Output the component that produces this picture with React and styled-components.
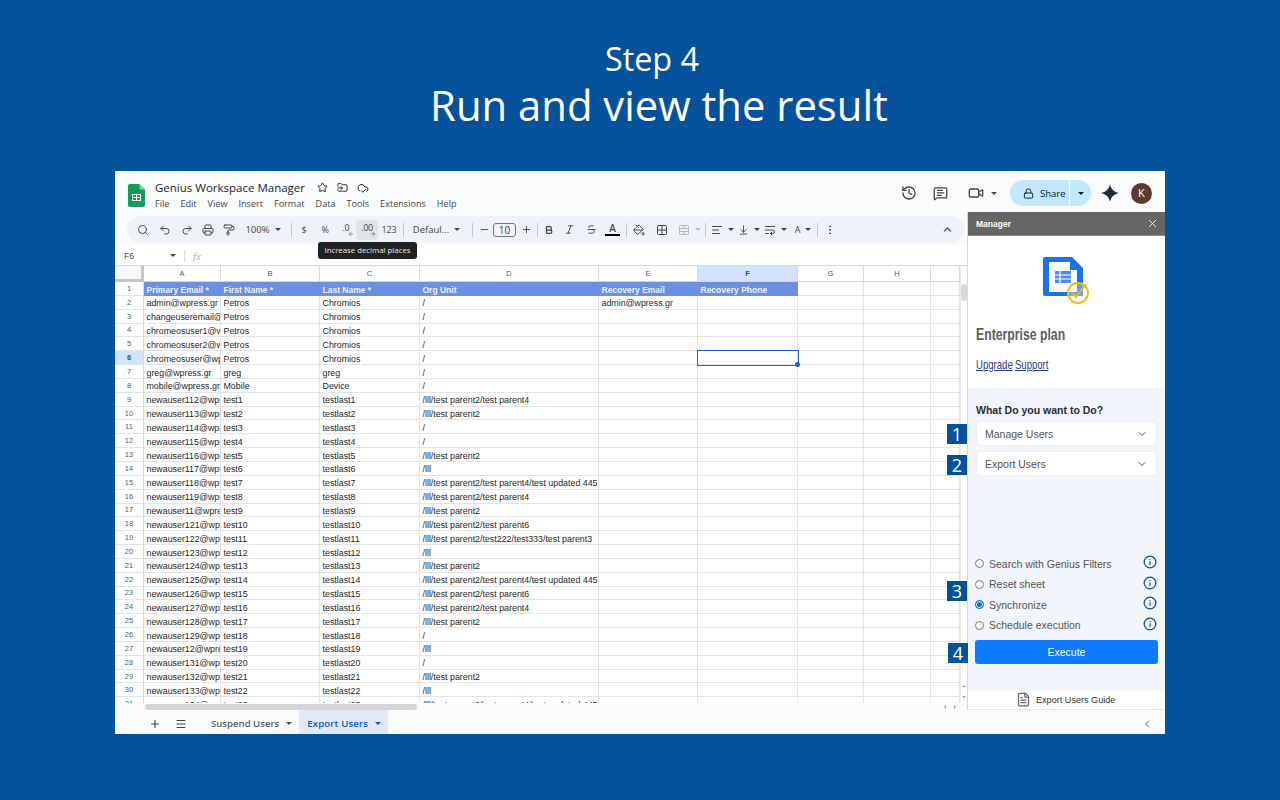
import React from 'react'
import styled, { createGlobalStyle } from 'styled-components'
import {
  Search, Undo2, Redo2, Printer, PaintRoller, Bold, Italic, Strikethrough, PaintBucket, Grid2x2,
  AlignLeft, ArrowDownToLine, EllipsisVertical, ChevronUp, ChevronDown, ChevronLeft, History,
  MessageSquareText, Video, Lock, Star, FolderInput, CloudCheck, X, Info, Plus, Menu, FileText,
  Minus, WrapText, TableCellsMerge, ArrowLeft, ArrowRight,
} from 'lucide-react'

const GlobalStyle = createGlobalStyle`
  html, body { margin: 0; padding: 0; background: #04529b; }
  * { box-sizing: border-box; }
`

const Page = styled.div`
  width: 1280px;
  height: 800px;
  background: #04529b;
  font-family: "Liberation Sans", Arial, sans-serif;
  overflow: hidden;
`
const Heading = styled.header`
  height: 171px;
  padding: 35px 0 0 24px;
  text-align: center;
  color: #fff;
  font-family: "Open Sans", sans-serif;
`
const StepLine = styled.div`
  font-size: 32.4px;
  line-height: 46px;
`
const TitleLine = styled.div`
  padding-left: 14px;
  font-size: 41.8px;
  line-height: 47px;
`
const Win = styled.div`
  position: relative;
  width: 1050px;
  height: 563px;
  margin-left: 115px;
  background: #f9fbfd;
  display: flex;
  flex-direction: column;
`
const TopBar = styled.div`
  height: 41px;
  display: flex;
  align-items: center;
  padding: 3px 0 0 13px;
  color: #444746;
  & > svg { margin-top: 5px; }
`
const TitleBox = styled.div`
  margin-left: 10px;
  display: flex;
  flex-direction: column;
  gap: 3px;
  padding-top: 4px;
`
const DocRow = styled.div`
  display: flex;
  align-items: center;
  gap: 9px;
  font-family: "Open Sans", sans-serif;
  font-size: 11.5px;
  line-height: 14px;
  color: #1f1f1f;
  & > span { margin-right: 3px; }
`
const MenuRow = styled.div`
  display: flex;
  gap: 11px;
  font-family: "Open Sans", sans-serif;
  font-size: 9.1px;
  line-height: 12px;
  color: #444746;
`
const TopActions = styled.div`
  margin-left: auto;
  display: flex;
  align-items: center;
  padding-right: 13px;
`
const VideoBox = styled.div`
  display: flex;
  align-items: center;
  margin: 0 13px 0 20px;
  gap: 7px;
`
const Caret = styled.span`
  display: inline-block;
  flex: none;
  width: 0;
  height: 0;
  margin: ${(p) => p.$m || '0'};
  border-left: 3px solid transparent;
  border-right: 3px solid transparent;
  border-top: 3px solid ${(p) => p.$color || '#444746'};
`
const ShareBtn = styled.div`
  display: flex;
  align-items: center;
  height: 26px;
  width: 81px;
  border-radius: 13px;
  background: #c2e7ff;
  color: #001d35;
  font-family: "Open Sans", sans-serif;
  font-size: 9.5px;
`
const ShareMain = styled.div`
  flex: 1;
  height: 100%;
  display: flex;
  align-items: center;
  gap: 6px;
  padding-left: 13px;
  border-right: 1px solid #f9fbfd;
`
const ShareDrop = styled.div`
  width: 21px;
  display: flex;
  justify-content: center;
`
const SparkWrap = styled.span`
  margin-left: 10px;
  display: flex;
`
const Avatar = styled.div`
  width: 21px;
  height: 21px;
  margin-left: 12px;
  border-radius: 50%;
  background: #5d3a2f;
  color: #fff;
  font-size: 10px;
  display: flex;
  align-items: center;
  justify-content: center;
`
const Body = styled.div`
  height: 498px;
  display: flex;
`
const Left = styled.div`
  width: 853px;
  display: flex;
  flex-direction: column;
  background: #fff;
  border-right: 1px solid #d5d7da;
`
const ToolWrap = styled.div`
  background: #f9fbfd;
  padding: 4px 2px 3px 12px;
`
const ToolPill = styled.div`
  height: 27px;
  border-radius: 14px;
  background: #eff3f9;
  display: flex;
  align-items: center;
  padding-left: 5px;
  color: #444746;
  font-family: "Open Sans", sans-serif;
  font-size: 9.5px;
`
const Tool = styled.div`
  position: relative;
  flex: none;
  width: ${(p) => p.$w || 21}px;
  height: 20px;
  margin-left: ${(p) => p.$ml || '0'};
  margin-right: ${(p) => p.$mr || '0'};
  display: flex;
  align-items: center;
  justify-content: center;
  gap: 5px;
  border-radius: 3px;
  color: ${(p) => p.$color || '#444746'};
  background: ${(p) => (p.$hover ? '#e1e5ea' : 'transparent')};
`
const ToolSep = styled.div`
  flex: none;
  width: 1px;
  height: 14px;
  margin: ${(p) => p.$m || '0 4px'};
  background: #c7c7c7;
`
const SizeBox = styled.div`
  flex: none;
  width: 23px;
  height: 14px;
  border: 1px solid #747775;
  border-radius: 3px;
  text-align: center;
  line-height: 12px;
  font-size: 10px;
`
const ColorA = styled.div`
  font-size: 10px;
  line-height: 10px;
  font-weight: 600;
  text-align: center;
  border-bottom: 2px solid #000;
  width: 15px;
  padding-bottom: 1px;
`
const DecText = styled.span`
  font-size: 9px;
  letter-spacing: -0.2px;
  margin-top: ${(p) => (p.$raised ? '-4px' : '0')};
`
const DecArrow = styled.span`
  position: absolute;
  right: 2px;
  bottom: 3px;
  display: flex;
`
const Tooltip = styled.div`
  position: absolute;
  left: 203px;
  top: 71px;
  z-index: 5;
  width: 99px;
  height: 17px;
  border-radius: 3px;
  background: #202124;
  color: #e8eaed;
  font-family: "Open Sans", sans-serif;
  font-size: 7.8px;
  line-height: 16px;
  text-align: center;
  white-space: nowrap;
`
const FormulaBar = styled.div`
  height: 20px;
  flex: none;
  display: flex;
  align-items: center;
  padding-left: 9px;
  font-size: 8.5px;
  color: #444746;
  border-bottom: 1px solid #d8d9db;
`
const NameBox = styled.div`
  width: 60px;
  display: flex;
  align-items: center;
  justify-content: space-between;
  padding-right: 8px;
`
const FxMark = styled.span`
  padding-left: 8px;
  border-left: 1px solid #d8d9db;
  font-family: "Liberation Serif", serif;
  font-style: italic;
  font-size: 11px;
  color: #b0b2b5;
`
const SheetArea = styled.div`
  flex: 1;
  min-height: 0;
  display: flex;
  flex-direction: column;
`
const SheetMain = styled.div`
  flex: 1;
  min-height: 0;
  display: flex;
`
const Grid = styled.div`
  width: 845px;
  height: 100%;
  overflow: hidden;
  display: grid;
  grid-template-columns: 29px 77px 99px 100px 179px 99px 100px 66px 67px 29px;
  grid-template-rows: 16px;
  grid-auto-rows: 13.85px;
  align-content: start;
`
const ColHead = styled.div`
  display: flex;
  align-items: center;
  justify-content: center;
  font-size: 7.5px;
  color: ${(p) => (p.$active ? '#0b57d0' : '#575a5e')};
  font-weight: ${(p) => (p.$active ? 700 : 400)};
  background: ${(p) => (p.$active ? '#d3e3fd' : '#fff')};
  border-right: 1px solid #d5d7da;
  border-bottom: 1px solid #d5d7da;
`
const Corner = styled(ColHead)`
  border-right: 3px solid #c4c6c9;
  border-bottom: 3px solid #c4c6c9;
  background: #f8f9fa;
`
const RowNum = styled.div`
  display: flex;
  align-items: center;
  justify-content: center;
  font-size: 7.5px;
  color: ${(p) => (p.$active ? '#0b57d0' : '#575a5e')};
  font-weight: ${(p) => (p.$active ? 700 : 400)};
  background: ${(p) => (p.$active ? '#d3e3fd' : '#fff')};
  border-right: 1px solid #d5d7da;
  border-bottom: 1px solid #e3e4e6;
`
const Cell = styled.div`
  position: relative;
  padding: 0.5px 0 0 2.5px;
  font-size: ${(p) => (p.$head ? 8.5 : 8.85)}px;
  line-height: 14px;
  white-space: nowrap;
  overflow: ${(p) => (p.$selected ? 'visible' : 'hidden')};
  z-index: ${(p) => (p.$selected ? 2 : 'auto')};
  color: ${(p) => (p.$head ? '#e9effc' : '#1f1f1f')};
  font-weight: ${(p) => (p.$head ? 700 : 400)};
  background: ${(p) => (p.$head ? '#6d8fe3' : '#fff')};
  border-right: 1px solid ${(p) => (p.$head ? '#6d8fe3' : '#e3e4e6')};
  border-bottom: 1px solid ${(p) => (p.$head ? '#6d8fe3' : '#e3e4e6')};
  ${(p) =>
    p.$selected &&
    `
    box-shadow: 0 0 0 1px #1a66d6;
    &::after {
      content: '';
      position: absolute;
      right: -3px;
      bottom: -3px;
      width: 5px;
      height: 5px;
      border-radius: 50%;
      background: #1a66d6;
    }
  `}
`
const VScroll = styled.div`
  width: 7px;
  flex: none;
  padding: 18px 0 5px;
  background: #fff;
  border-left: 1px solid #eceef0;
  display: flex;
  flex-direction: column;
  align-items: center;
`
const VThumb = styled.div`
  width: 6px;
  height: 17px;
  border-radius: 3px;
  background: #d6d8da;
`
const VArrows = styled.div`
  margin-top: auto;
  display: flex;
  flex-direction: column;
  gap: 9px;
`
const ArrowUp = styled.span`
  display: block;
  border-left: 2px solid transparent;
  border-right: 2px solid transparent;
  border-bottom: 2px solid #9a9c9f;
`
const ArrowDown = styled.span`
  display: block;
  border-left: 2px solid transparent;
  border-right: 2px solid transparent;
  border-top: 2px solid #9a9c9f;
`
const HScroll = styled.div`
  height: 7px;
  flex: none;
  background: #fbfbfb;
  padding: 0 11px 0 30px;
  display: flex;
  align-items: center;
  justify-content: space-between;
`
const HThumb = styled.div`
  width: 272px;
  height: 6px;
  border-radius: 3px;
  background: #d3d5d7;
`
const HArrows = styled.div`
  display: flex;
  gap: 8px;
`
const ArrowL = styled.span`
  border-top: 2px solid transparent;
  border-bottom: 2px solid transparent;
  border-right: 2px solid #9a9c9f;
`
const ArrowR = styled.span`
  border-top: 2px solid transparent;
  border-bottom: 2px solid transparent;
  border-left: 2px solid #9a9c9f;
`
const Panel = styled.aside`
  position: relative;
  flex: 1;
  display: flex;
  flex-direction: column;
  background: #fff;
`
const PanelHead = styled.div`
  height: 24px;
  flex: none;
  background: #666664;
  color: #fff;
  font-size: 8.5px;
  font-weight: 700;
  display: flex;
  align-items: center;
  justify-content: space-between;
  padding: 0 6px 0 8px;
  border-bottom: 1px solid #8b8b8b;
`
const PlanBox = styled.div`
  height: 152px;
  flex: none;
  padding: 20px 8px 0;
`
const LogoWrap = styled.div`
  height: 48px;
  display: flex;
  justify-content: center;
  padding-right: 2px;
`
const PlanName = styled.div`
  margin-top: 21px;
  font-size: 17px;
  line-height: 20px;
  font-weight: 700;
  color: #5b5e62;
  white-space: nowrap;
  transform: scaleX(0.72);
  transform-origin: left center;
`
const PlanLinks = styled.div`
  margin-top: 12px;
  display: flex;
  gap: 3px;
  font-size: 13.5px;
  line-height: 16px;
  color: #2d3a96;
  white-space: nowrap;
  transform: scaleX(0.71);
  transform-origin: left center;
  & > span { text-decoration: underline; }
`
const ActionBox = styled.div`
  flex: 1;
  min-height: 0;
  background: #f3f5fc;
  padding: 16px 7px 0;
  display: flex;
  flex-direction: column;
`
const Ask = styled.div`
  font-size: 10.5px;
  line-height: 13px;
  font-weight: 700;
  color: #2b2b33;
  padding-left: 1px;
`
const Select = styled.div`
  height: 23px;
  width: 179px;
  margin: ${(p) => p.$mt}px 0 0 2px;
  background: #fff;
  border-radius: 4px;
  box-shadow: 0 0 2px rgba(60, 70, 90, 0.12);
  display: flex;
  align-items: center;
  justify-content: space-between;
  padding: 0 8px;
  font-size: 10.5px;
  color: #555;
`
const RadioList = styled.div`
  margin-top: 82px;
  display: flex;
  flex-direction: column;
  gap: 7.5px;
`
const RadioRow = styled.div`
  height: 13px;
  width: 182px;
  display: flex;
  align-items: center;
  font-size: 10.5px;
  color: #555;
`
const Dot = styled.span`
  flex: none;
  width: 9px;
  height: 9px;
  margin-right: 5px;
  border-radius: 50%;
  border: 1px solid ${(p) => (p.$on ? '#0a6cdc' : '#77797c')};
  box-shadow: ${(p) => (p.$on ? 'inset 0 0 0 1px #fff' : 'none')};
  background: ${(p) => (p.$on ? '#0a6cdc' : '#fff')};
`
const InfoMark = styled.span`
  margin-left: auto;
  margin-top: -3px;
  color: #0a4d9c;
  display: flex;
`
const ExecBtn = styled.div`
  width: 183px;
  height: 24px;
  margin-top: 8px;
  border-radius: 3px;
  background: #0d7bfd;
  color: #fff;
  font-size: 10.5px;
  display: flex;
  align-items: center;
  justify-content: center;
`
const GuideBar = styled.div`
  height: 19px;
  flex: none;
  background: #fff;
  display: flex;
  align-items: center;
  padding: 0 0 1px 48px;
  gap: 5px;
  font-size: 9.1px;
  color: #333;
  border-bottom: 1px solid #e2e3e5;
  & > svg { color: #666; }
`
const NumBadge = styled.div`
  position: absolute;
  left: ${(p) => p.$left}px;
  top: ${(p) => p.$top}px;
  width: 20px;
  height: 20px;
  background: #04529b;
  color: #fff;
  font-family: "Open Sans", sans-serif;
  font-size: 18px;
  line-height: 20px;
  text-align: center;
`
const TabBar = styled.div`
  flex: 1;
  display: flex;
  align-items: center;
  padding-left: 34px;
  color: #444746;
  font-family: "Open Sans", sans-serif;
  font-size: 9.6px;
  font-weight: 600;
  & > svg { margin-top: 3px; }
`
const Tab = styled.div`
  height: 100%;
  display: flex;
  align-items: center;
  gap: 7px;
  padding: 3px 7px 0 8px;
  margin-left: ${(p) => p.$ml || 0}px;
  letter-spacing: ${(p) => (p.$active ? '0.15px' : '0')};
  color: ${(p) => (p.$active ? '#0b57d0' : '#5f6368')};
  background: ${(p) => (p.$active ? '#e1e9f7' : 'transparent')};
`
const TabEnd = styled.div`
  margin-left: auto;
  padding: 3px 12px 0 0;
  display: flex;
  color: #5f6368;
`

const COLS = ['A', 'B', 'C', 'D', 'E', 'F', 'G', 'H', '']
const HEAD = ['Primary Email *', 'First Name *', 'Last Name *', 'Org Unit', 'Recovery Email', 'Recovery Phone']
const P2 = '/lll/test parent2'
const P4 = P2 + '/test parent4'
const P6 = P2 + '/test parent6'
const P445 = P4 + '/test updated 445'
const ROWS = [
  ['admin@wpress.gr', 'Petros', 'Chromios', '/', 'admin@wpress.gr'],
  ['changeuseremail@wpress.gr', 'Petros', 'Chromios', '/'],
  ['chromeosuser1@wpress.gr', 'Petros', 'Chromios', '/'],
  ['chromeosuser2@wpress.gr', 'Petros', 'Chromios', '/'],
  ['chromeosuser@wpress.gr', 'Petros', 'Chromios', '/'],
  ['greg@wpress.gr', 'greg', 'greg', '/'],
  ['mobile@wpress.gr', 'Mobile', 'Device', '/'],
]
const UNITS = [
  ['112', P4], ['113', P2], ['114', '/'], ['115', '/'], ['116', P2], ['117', '/lll'], ['118', P445],
  ['119', P4], ['11', P2], ['121', P6], ['122', P2 + '/test222/test333/test parent3'], ['123', '/lll'],
  ['124', P2], ['125', P445], ['126', P6], ['127', P4], ['128', P2], ['129', '/'], ['12', '/lll'],
  ['131', '/'], ['132', P2], ['133', '/lll'], ['134', P445],
]
UNITS.forEach(([n, unit], i) => {
  ROWS.push([`newauser${n}@wpress.gr`, `test${i + 1}`, `testlast${i + 1}`, unit])
})

function SheetsLogo() {
  return (
    <svg width="17" height="23" viewBox="0 0 17 23">
      <path d="M2 0h9.5L17 5.500V21a2 2 0 0 1-2 2H2a2 2 0 0 1-2-2V2a2 2 0 0 1 2-2z" fill="#0f9d58" />
      <path d="M11.500 0v5.500H17z" fill="#87ceac" />
      <path d="M4 10h9v7H4z M5 11v2h3v-2z M9 11v2h3v-2z M5 14v2h3v-2z M9 14v2h3v-2z" fill="#fff" fillRule="evenodd" />
    </svg>
  )
}

function PlanLogo() {
  return (
    <svg width="48" height="48" viewBox="0 0 48 48">
      <path d="M3 1h27l11 11v28H3a2 2 0 0 1-2-2V3a2 2 0 0 1 2-2z" fill="#1a73e8" />
      <path d="M7 6h21v8h7v22H7z" fill="#fff" />
      <path d="M13 15h16v12H13z" fill="#4d8df0" />
      <path d="M13 19h16M13 23h16M18 15v12" stroke="#fff" strokeWidth="1.2" />
      <circle cx="36" cy="37" r="10" fill="#fff" fillOpacity="0.35" stroke="#f9b91d" strokeWidth="2" />
      <path d="M30 37l4 4 10-13" fill="none" stroke="#f9b91d" strokeWidth="2" />
    </svg>
  )
}

function Spark() {
  return (
    <svg width="18" height="18" viewBox="0 0 18 18">
      <path d="M9 0c.9 5 3.900 8 9 9-5.100 1-8.100 4-9 9-.9-5-3.900-8-9-9 5.100-1 8.100-4 9-9z" fill="#1f2a44" />
    </svg>
  )
}

export default function App() {
  return (
    <Page>
      <GlobalStyle />
      <Heading>
        <StepLine>Step 4</StepLine>
        <TitleLine>Run and view the result</TitleLine>
      </Heading>
      <Win>
        <TopBar>
          <SheetsLogo />
          <TitleBox>
            <DocRow>
              <span>Genius Workspace Manager</span>
              <Star size={11} />
              <FolderInput size={11} />
              <CloudCheck size={12} />
            </DocRow>
            <MenuRow>
              {['File', 'Edit', 'View', 'Insert', 'Format', 'Data', 'Tools', 'Extensions', 'Help'].map((m) => (
                <span key={m}>{m}</span>
              ))}
            </MenuRow>
          </TitleBox>
          <TopActions>
            <History size={16} style={{ marginRight: 16 }} />
            <MessageSquareText size={15} />
            <VideoBox>
              <Video size={16} />
              <Caret />
            </VideoBox>
            <ShareBtn>
              <ShareMain>
                <Lock size={11} />
                Share
              </ShareMain>
              <ShareDrop>
                <Caret $color="#001d35" />
              </ShareDrop>
            </ShareBtn>
            <SparkWrap>
              <Spark />
            </SparkWrap>
            <Avatar>K</Avatar>
          </TopActions>
        </TopBar>
        <Body>
          <Left>
            <ToolWrap>
              <ToolPill>
                <Tool $w={22}><Search size={12} /></Tool>
                <Tool $w={22}><Undo2 size={12} /></Tool>
                <Tool><Redo2 size={12} /></Tool>
                <Tool><Printer size={12} /></Tool>
                <Tool><PaintRoller size={12} /></Tool>
                <Tool $w={48}>100%<Caret /></Tool>
                <ToolSep $m="0 2px 0 4px" />
                <Tool $w={20}><DecText>$</DecText></Tool>
                <Tool $w={22}><DecText>%</DecText></Tool>
                <Tool $w={20}>
                  <DecText $raised>.0</DecText>
                  <DecArrow><ArrowLeft size={6} /></DecArrow>
                </Tool>
                <Tool $w={22} $hover>
                  <DecText $raised>.00</DecText>
                  <DecArrow><ArrowRight size={6} /></DecArrow>
                </Tool>
                <Tool $w={22}><DecText>123</DecText></Tool>
                <ToolSep $m="0 3px" />
                <Tool $w={59}>Defaul...<Caret /></Tool>
                <ToolSep $m="0 2px 0 6px" />
                <Tool $w={18}><Minus size={11} /></Tool>
                <SizeBox>10</SizeBox>
                <Tool $w={20}><Plus size={11} /></Tool>
                <ToolSep $m="0 0 0 1px" />
                <Tool $w={21}><Bold size={10} strokeWidth={3} /></Tool>
                <Tool $w={21}><Italic size={11} /></Tool>
                <Tool $w={22}><Strikethrough size={11} /></Tool>
                <Tool $w={21}><ColorA>A</ColorA></Tool>
                <ToolSep $m="0 2px 0 3px" />
                <Tool $w={20}><PaintBucket size={12} /></Tool>
                <Tool $w={25}><Grid2x2 size={12} /></Tool>
                <Tool $w={31} $color="#b6b9bc"><TableCellsMerge size={12} /><Caret $color="#b6b9bc" /></Tool>
                <ToolSep $m="0" />
                <Tool $w={32}><AlignLeft size={12} /><Caret /></Tool>
                <Tool $w={22}><ArrowDownToLine size={12} /><Caret /></Tool>
                <Tool $w={30}><WrapText size={12} /><Caret /></Tool>
                <Tool $w={26}><DecText>A</DecText><Caret /></Tool>
                <ToolSep $m="0 0 0 1px" />
                <Tool $w={24}><EllipsisVertical size={12} /></Tool>
                <Tool $ml="auto" $mr="7px"><ChevronUp size={13} /></Tool>
              </ToolPill>
            </ToolWrap>
            <Tooltip>Increase decimal places</Tooltip>
            <FormulaBar>
              <NameBox>
                F6
                <Caret />
              </NameBox>
              <FxMark>fx</FxMark>
            </FormulaBar>
            <SheetArea>
              <SheetMain>
                <Grid>
                  <Corner />
                  {COLS.map((c, i) => (
                    <ColHead key={i} $active={c === 'F'}>{c}</ColHead>
                  ))}
                  <RowNum>1</RowNum>
                  {HEAD.map((h) => (
                    <Cell key={h} $head>{h}</Cell>
                  ))}
                  <Cell /><Cell /><Cell />
                  {ROWS.map((row, r) => (
                    <React.Fragment key={r}>
                      <RowNum $active={r === 4}>{r + 2}</RowNum>
                      {[0, 1, 2, 3, 4, 5, 6, 7, 8].map((c) => (
                        <Cell key={c} $selected={r === 4 && c === 5}>{row[c]}</Cell>
                      ))}
                    </React.Fragment>
                  ))}
                </Grid>
                <VScroll>
                  <VThumb />
                  <VArrows>
                    <ArrowUp />
                    <ArrowDown />
                  </VArrows>
                </VScroll>
              </SheetMain>
              <HScroll>
                <HThumb />
                <HArrows>
                  <ArrowL />
                  <ArrowR />
                </HArrows>
              </HScroll>
            </SheetArea>
          </Left>
          <Panel>
            <PanelHead>
              Manager
              <X size={13} strokeWidth={1.5} />
            </PanelHead>
            <PlanBox>
              <LogoWrap>
                <PlanLogo />
              </LogoWrap>
              <PlanName>Enterprise plan</PlanName>
              <PlanLinks>
                <span>Upgrade</span>
                <span>Support</span>
              </PlanLinks>
            </PlanBox>
            <ActionBox>
              <Ask>What Do you want to Do?</Ask>
              <Select $mt={5}>
                Manage Users
                <ChevronDown size={12} />
              </Select>
              <Select $mt={7}>
                Export Users
                <ChevronDown size={12} />
              </Select>
              <RadioList>
                {['Search with Genius Filters', 'Reset sheet', 'Synchronize', 'Schedule execution'].map((t) => (
                  <RadioRow key={t}>
                    <Dot $on={t === 'Synchronize'} />
                    {t}
                    <InfoMark><Info size={14} strokeWidth={2.2} /></InfoMark>
                  </RadioRow>
                ))}
              </RadioList>
              <ExecBtn>Execute</ExecBtn>
            </ActionBox>
            <GuideBar>
              <FileText size={15} />
              Export Users Guide
            </GuideBar>
            <NumBadge $left={-21} $top={212}>1</NumBadge>
            <NumBadge $left={-21} $top={243}>2</NumBadge>
            <NumBadge $left={-21} $top={369}>3</NumBadge>
            <NumBadge $left={-20} $top={431}>4</NumBadge>
          </Panel>
        </Body>
        <TabBar>
          <Plus size={12} strokeWidth={2.4} />
          <Menu size={12} style={{ marginLeft: 14 }} />
          <Tab $ml={16}>Suspend Users<Caret /></Tab>
          <Tab $active>Export Users<Caret $color="#0b57d0" /></Tab>
          <TabEnd><ChevronLeft size={12} /></TabEnd>
        </TabBar>
      </Win>
    </Page>
  )
}
